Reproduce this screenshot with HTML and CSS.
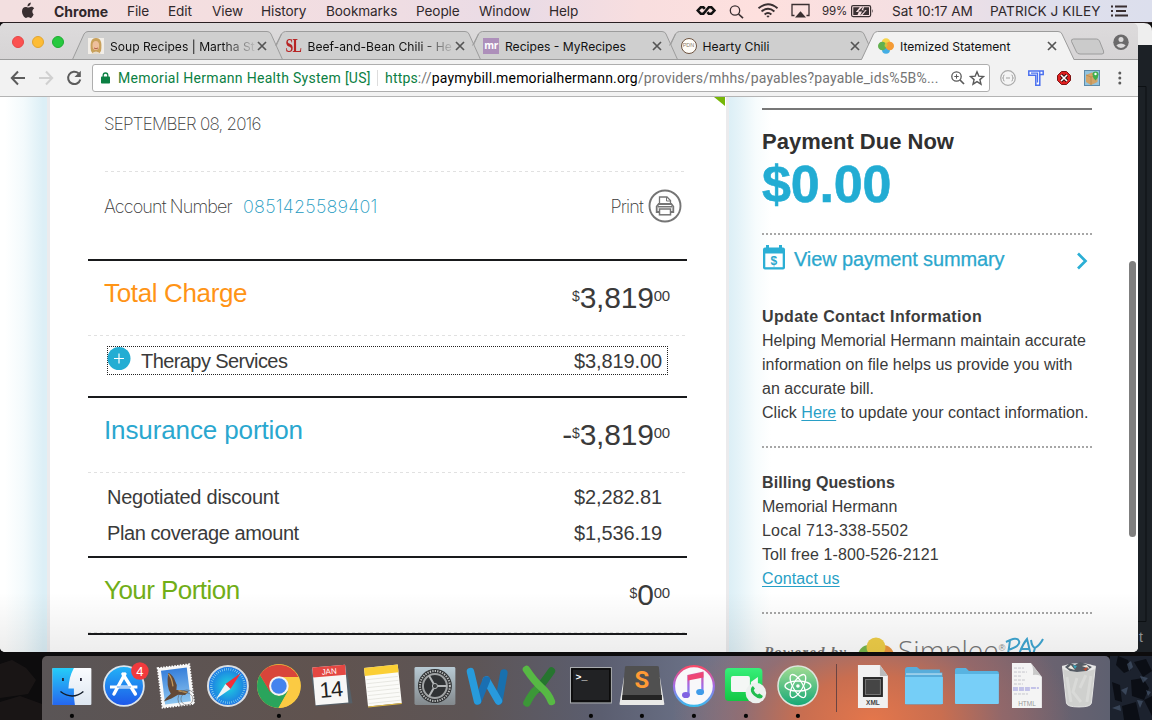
FILE: index.html
```html
<!DOCTYPE html>
<html lang="en">
<head>
<meta charset="utf-8">
<title>Itemized Statement</title>
<link rel="stylesheet" href="styles.css">
</head>
<body>
<div class="desktop">
  <svg class="wallpaper" width="1152" height="720" viewBox="0 0 1152 720">
    <rect width="1152" height="720" fill="#0d0c0d"/>
    <path d="M1120 23h24q8 0 8 8v14h-32z" fill="#eee"/>
    <rect x="1120" y="45" width="32" height="607" fill="#1c2126"/>
    <path d="M1138 86.500h8v535h-8" fill="none" stroke="#0c1013"/>
    <g fill="#201a19"><path d="M0 664l12-4 14 8 10 12-8 14-28 4zM0 702l20-6 22 8v16H0z" opacity=".7"/></g>
    <g fill="#232c3d"><path d="M1110 656h42v64h-42z" opacity=".7"/></g>
    <g fill="#0b0e15"><path d="M1118 656l10 4 3 10-7 3-8-8zM1134 662l12-3 6 12-9 6zM1112 682l8 3 2 17-7-2zM1131 680l12-2 6 10-5 12-12-4zM1122 706l14-4 4 18h-16zM1144 700l8-4v20z"/></g>
    <g fill="#52647d" opacity=".55"><path d="M1127 664l4-3 2 6-4 4zM1140 676l8 2-5 5zM1121 690l7-3-2 8zM1112 708l8-3 1 6zM1137 700l6 1-3 7zM1146 690l5 2-3 4z"/></g>
  </svg>
  <header class="menubar">
    <svg class="apple" width="54" height="22" viewBox="0 0 54 22"><path d="M33.600 14.200c-.7 2-1.900 3.700-3 3.700-.9 0-1.300-.6-2.300-.6s-1.500.6-2.300.6c-1.600 0-4-3.500-4-6.700 0-2.800 1.800-4.300 3.600-4.300 1.100 0 1.900.7 2.700.7.700 0 1.700-.8 3.100-.8 1.100 0 2.200.6 2.800 1.500-2.500 1.500-2.100 4.900-.6 5.900zM30.800 2.600c.2 2-1.400 3.900-3.300 3.900-.3-1.900 1.400-3.700 3.300-3.900z" fill="#392f31"/></svg>
    <b class="m-app">Chrome</b><span>File</span><span>Edit</span><span>View</span><span>History</span><span class="m-book">Bookmarks</span><span>People</span><span>Window</span><span>Help</span>
    <svg class="status" width="126" height="22" viewBox="0 0 126 22" fill="none" stroke="#392f31">
      <path d="M8.800 8.800L7.400 7.200H4.800L1.800 10.500l3 3.300h2.600l5.400-6.600h2.600l3 3.300-3 3.300h-2.600l-1.400-1.600" stroke="#111" stroke-width="2.600"/>
      <circle cx="39" cy="10.500" r="4.700" stroke-width="1.300"/><path d="M42.500 14l4.500 4.200" stroke-width="1.700"/>
      <path d="M62.500 8.300q9.500-8 19 0M65.600 11.400q6.400-5.400 12.800 0M68.600 14.400q3.400-2.800 6.800 0" stroke-width="1.900"/><path d="M70.400 16l1.600 1.700 1.600-1.700q-1.600-1-3.200 0z" fill="#392f31" stroke="none"/>
      <path d="M98.500 15.500h-2.500v-11h17v11h-2.500" stroke-width="1.300"/><path d="M99 17.500l5.500-6.300 5.500 6.300z" fill="#392f31" stroke="none"/>
    </svg>
    <span class="m-pct">99%</span>
    <svg width="42" height="22" viewBox="0 0 42 22"><g transform="translate(1)"><rect x=".6" y="5.600" width="19" height="11" rx="1.500" fill="none" stroke="#392f31" stroke-width="1.200"/><path d="M2.300 7.300h6.500l-4 4.700h3l-1.300 3H2.300zM13 7.300h5V15h-6.500l4.300-5h-3.600zM21 9q1.500 2 0 4z" fill="#392f31"/><path d="M12 6.500l-5 5h4l-2 4.200 5.500-5.400h-4z" fill="#392f31"/></g></svg>
    <span class="m-time">Sat 10:17 AM</span><span class="m-user">PATRICK J KILEY</span>
    <svg width="20" height="22" viewBox="0 0 20 22"><path d="M1 6.500h2M1 11h2M1 15.500h2M5 6.500h12M6 11h10M5 15.500h13" stroke="#392f31" stroke-width="1.900"/></svg>
  </header>

  <main class="window">
    <div class="tabstrip">
      <svg class="tabshapes" width="1138" height="37" viewBox="0 0 1138 37">
        <g fill="#cfcfcf" stroke="#9c9c9c">
          <path d="M664 36.500L675.500 11q1.500-2.500 4-2.500H860q3 0 4 2.500l11.500 25.500"/>
          <path d="M467 36.500L478.500 11q1.500-2.500 4-2.500H662q3 0 4 2.500l11.500 25.500"/>
          <path d="M270 36.500L281.500 11q1.500-2.500 4-2.500H465q3 0 4 2.500l11.500 25.500"/>
          <path d="M72.500 36.500L84 11q1.500-2.500 4-2.500H267q3 0 4 2.500l11.500 25.500"/>
        </g>
        <path d="M275.500 22.500L281.500 11M472.500 22.500L478.500 11M669.500 22.500L675.500 11" stroke="#9c9c9c"/>
        <path d="M0 36.500h1138" stroke="#9c9c9c"/>
        <path d="M861.500 37L873.500 11q1.500-2.500 4-2.500H1058q3 0 4 2.500l12 26z" fill="#f2f2f2"/>
        <path d="M861.500 36.500L873.500 11q1.500-2.500 4-2.500H1058q3 0 4 2.500l12 25.500" fill="none" stroke="#9c9c9c"/>
        <path d="M1071.500 18.500q-.5-2.500 2-2.500h23q2 0 3 2l4 10q1 3-1.500 3h-22q-2.500 0-3.500-2z" fill="#cbcbcb" stroke="#9c9c9c"/>
        <circle cx="1121" cy="19.200" r="7.700" fill="#6b6a6b"/><circle cx="1121" cy="16.600" r="2.500" fill="#dcdadb"/><path d="M1116.300 22.300q4.700-3.700 9.400 0-1.600 2.600-4.700 2.600t-4.700-2.600z" fill="#dcdadb"/>
      </svg>
      <div class="lights"><i class="red"></i><i class="yellow"></i><i class="green"></i></div>
      <div class="tab">
        <svg width="16" height="16"><rect width="16" height="16" fill="#f2eee8"/><path d="M3 13q-2-13 5-13t5 13l-2 3H5z" fill="#c9a15b"/><ellipse cx="7.800" cy="7.500" rx="3.300" ry="4.500" fill="#eebf9c"/><path d="M6 10q2 1.500 4 0" stroke="#b4604d" fill="none"/><path d="M3 16q5-5 10 0z" fill="#e7dccc"/></svg>
        <span class="fade">Soup Recipes | Martha St</span><svg class="x" width="10" height="10"><path d="M1 1l8 8M9 1L1 9"/></svg></div>
      <div class="tab">
        <span class="fav-sl">SL</span>
        <span class="fade">Beef-and-Bean Chili - He</span><svg class="x" width="10" height="10"><path d="M1 1l8 8M9 1L1 9"/></svg></div>
      <div class="tab">
        <span class="fav-mr">mr</span>
        <span>Recipes - MyRecipes</span><svg class="x" width="10" height="10"><path d="M1 1l8 8M9 1L1 9"/></svg></div>
      <div class="tab">
        <span class="fav-pdn">PDN</span>
        <span>Hearty Chili</span><svg class="x" width="10" height="10"><path d="M1 1l8 8M9 1L1 9"/></svg></div>
      <div class="tab">
        <svg width="16" height="16"><circle cx="8" cy="4.500" r="4.200" fill="#f6d44a"/><circle cx="8" cy="11.800" r="4" fill="#44aee4"/><circle cx="4.300" cy="8" r="4.300" fill="#62b14f"/><circle cx="11.800" cy="8" r="4.200" fill="#f49b35"/><path d="M8 4q2 2 1.500 4L8 9.500 6.500 8q0-2 1.500-4z" fill="#d2c23b"/></svg>
        <span>Itemized Statement</span><svg class="x" width="10" height="10"><path d="M1 1l8 8M9 1L1 9"/></svg></div>
    </div>

    <div class="toolbar">
      <svg width="92" height="36" viewBox="0 0 92 36" fill="none" stroke-width="2">
        <path d="M25 18H12.500M18 11.500L11.800 18l6.200 6.500" stroke="#5c5c5c"/>
        <path d="M39 18h12.500M46 11.500l6.200 6.500-6.200 6.500" stroke="#d0d0d0"/>
        <path d="M78.500 13.300a6.200 6.200 0 1 0 1.800 6.200" stroke="#5c5c5c"/><path d="M80.800 10.800v6.300h-6.300z" fill="#5c5c5c"/>
      </svg>
      <div class="omnibox">
        <svg width="9" height="12" viewBox="0 0 9 12"><rect y="4.500" width="9" height="7" rx=".8" fill="#0b8043"/><path d="M2.200 5V3.300a2.300 2.300 0 0 1 4.600 0V5" fill="none" stroke="#0b8043" stroke-width="1.300"/></svg>
        <span class="org">Memorial Hermann Health System [US]</span>
        <span class="url"><em>https</em>://<b>paymybill.memorialhermann.org</b>/providers/mhhs/payables?payable_ids%5B%...</span>
        <svg class="omni-icons" width="36" height="16" viewBox="0 0 36 16" fill="none" stroke="#5a5a5a"><circle cx="6.500" cy="6.500" r="4.700" stroke-width="1.300"/><path d="M10 10l4 4" stroke-width="1.700"/><path d="M4.300 6.500h4.400M6.500 4.300v4.400"/><path d="M27 1.800l1.800 4.300 4.700.4-3.600 3.100 1.100 4.600-4-2.500-4 2.500 1.100-4.600-3.600-3.100 4.700-.4z" stroke-width="1.400"/></svg>
      </div>
      <svg width="146" height="36" viewBox="0 0 146 36">
        <circle cx="18" cy="18" r="7.300" fill="#f4f4f4" stroke="#aaa" stroke-width="1.200"/><path d="M14.500 15q-1.200 0-1 1.500t-1 1.500q1.200 0 1 1.500t1 1.500M21.500 15q1.200 0 1 1.500t1 1.500q-1.200 0-1 1.500t-1 1.500M16 18h4" fill="none" stroke="#999" stroke-width=".9"/>
        <path d="M38.800 11h14.400v3.500h-3.400v10.700h-4V15.200h-7z" fill="#fff" stroke="#4b70ee" stroke-width="1.500"/><path d="M41 13.100h6.500v9.500M49.800 14.500V11" fill="none" stroke="#4b70ee" stroke-width="1.300"/>
        <path d="M71.500 11.500h5l4 4v5l-4 4h-5l-4-4v-5z" fill="#df2020" stroke="#7b1414"/><path d="M71 15l6 6M77 15l-6 6" stroke="#301010" stroke-width="3.200"/><path d="M71 15l6 6M77 15l-6 6" stroke="#fff" stroke-width="1.600"/>
        <rect x="94.500" y="10.500" width="15" height="15" fill="#92c4df" stroke="#5e8baa"/><path d="M96 15l6-2.500 5.500 2.500v7L101 25l-5-3z" fill="#d3a468"/><path d="M101 17v8M96 15l5 2 6.500-2" stroke="#b8854c" stroke-width=".8" fill="none"/><path d="M105.500 11.500q3 0 3 3t-3 6q-3-3-3-6t3-3z" fill="#3fae4d"/><circle cx="105.500" cy="14" r="1.200" fill="#fff"/>
        <g fill="#5c5c5c"><circle cx="129.800" cy="13" r="1.500"/><circle cx="129.800" cy="18" r="1.500"/><circle cx="129.800" cy="23" r="1.500"/></g>
      </svg>
    </div>

    <div class="page">
      <div class="gutter"></div>
      <section class="statement">
        <span class="ribbon"></span>
        <div class="date"><span class="t-date">SEPTEMBER 08, 2016</span></div>
        <div class="account">
          <span class="t-acc">Account Number</span><span class="t-num">0851425589401</span>
          <span class="t-print">Print</span>
          <svg width="34" height="34" viewBox="0 0 34 34" fill="none" stroke="#757575"><circle cx="17" cy="17" r="15.500" stroke-width="1.900" fill="#fff"/><path d="M11.500 15V8h7.500l3.500 3.500V15" stroke-width="1.300"/><path d="M18.500 8v4h4"/><path d="M11 23H8.700v-5.500l2-2.500h12.600l2 2.500V23H23" stroke-width="1.800"/><rect x="11.500" y="20" width="11" height="5.800" stroke-width="1.500" fill="#fff"/><path d="M10 17.800h14" stroke-width="1.500"/></svg>
        </div>
        <div class="group charge">
          <div class="head"><h2 class="orange">Total Charge</h2><p class="amount"><sup>$</sup>3,819<sup class="c">00</sup></p></div>
          <div class="focus"><svg width="24" height="24"><circle cx="12" cy="11.500" r="11.500" fill="#23add3"/><path d="M12 6.500v10M7 11.500h10" stroke="#fff" stroke-width="1.200"/></svg><span class="t-th">Therapy Services</span><span class="val">$3,819.00</span></div>
        </div>
        <div class="group insurance">
          <div class="head"><h2 class="blue">Insurance portion</h2><p class="amount">-<sup>$</sup>3,819<sup class="c">00</sup></p></div>
          <div class="line"><span class="t-neg">Negotiated discount</span><span class="val">$2,282.81</span></div>
          <div class="line"><span class="t-plan">Plan coverage amount</span><span class="val">$1,536.19</span></div>
        </div>
        <div class="group yours"><div class="head"><h2 class="green-t">Your Portion</h2><p class="amount"><sup>$</sup>0<sup class="c">00</sup></p></div></div>
        <div class="group"></div>
      </section>
      <aside class="side">
        <div class="due"><h3>Payment Due Now</h3><strong>$0.00</strong></div>
        <a class="summary"><svg width="24" height="26" viewBox="0 0 24 26"><path d="M3 2.500h18q2 0 2 2v18q0 2-2 2H3q-2 0-2-2v-18q0-2 2-2z" fill="#2bafd5"/><path d="M3.300 8.500h17.400v13.700H3.300z" fill="#fff"/><path d="M5.500 0v4M18.500 0v4" stroke="#2bafd5" stroke-width="3"/></svg><i>$</i><span>View payment summary</span><svg class="chev" width="12" height="18"><path d="M2 1.500L9.500 9 2 16.500" fill="none" stroke="#2bafd5" stroke-width="2.700"/></svg></a>
        <div class="info contact"><h4 class="ha">Update Contact Information</h4><p><span class="l1">Helping Memorial Hermann maintain accurate</span><br>information on file helps us provide you with<br>an accurate bill.<br><span class="l4">Click <a>Here</a> to update your contact information.</span></p></div>
        <div class="info billing"><h4 class="hb">Billing Questions</h4><p><span class="l5">Memorial Hermann</span><br><span class="l6">Local 713-338-5502</span><br><span class="l7">Toll free 1-800-526-2121</span><br><a class="l8">Contact us</a></p></div>
        <div class="powered"><span class="pw">Powered by</span><svg width="36" height="30" viewBox="0 0 36 30"><circle cx="11" cy="19" r="11" fill="#78b84d"/><circle cx="25" cy="19" r="11" fill="#ec973f"/><circle cx="18" cy="10" r="9.500" fill="#f0cf48"/></svg><span class="simplee">Simplee</span><small>®</small><svg class="pay" width="40" height="30" viewBox="0 0 40 30" fill="none" stroke="#3fa7d3" stroke-width="2"><path d="M5 3Q4 12 2 22M1 5Q12-1 14 4T3 13M13 20Q17 8 22 2q2 8 4 17M16 12h9M26 3q1 7 4 8Q35 8 38 2M30 11l-4 13"/></svg></div>
      </aside>
      <div class="page-shade"></div>
      <div class="scrollbar"></div>
    </div>
  </main>
  <span class="stray">t</span>

  <footer class="dock">
    <svg viewBox="0 0 52 64"><defs><linearGradient id="fa" x2="0" y2="1"><stop stop-color="#25cdf8"/><stop offset="1" stop-color="#2567ef"/></linearGradient><linearGradient id="fb" x2="0" y2="1"><stop stop-color="#fafcff"/><stop offset="1" stop-color="#dde6f0"/></linearGradient></defs><rect x="6.500" y="12" width="39" height="37" rx="1" fill="url(#fb)"/><path d="M6.500 12H28q-5 9-5.500 20.500h5.500q-.5 8.500 1 16.500H6.500z" fill="url(#fa)"/><path d="M17 22v3M35 22v3" stroke="#223" stroke-width="1.800"/><path d="M14.500 35.500q12 9 23 0" fill="none" stroke="#121b28" stroke-width="1.500"/><circle class="run" cx="26" cy="60" r="2.100"/></svg>
    <svg viewBox="0 0 52 64"><defs><linearGradient id="as" x2="0" y2="1"><stop stop-color="#22b4f7"/><stop offset="1" stop-color="#1e55e8"/></linearGradient></defs><circle cx="26" cy="30" r="20" fill="url(#as)" stroke="#dce5ec" stroke-width="1.800"/><path d="M27 18L16 38M25 18l12.500 20" stroke="#fff" stroke-width="3.400" stroke-linecap="round"/><path d="M12 31h27.500" stroke="#fff" stroke-width="3"/><path d="M19 31h14" stroke="#2582ef" stroke-width=".8"/><circle cx="42" cy="15" r="8.800" fill="#f13a3d"/><text x="42" y="19.500" class="badge">4</text></svg>
    <svg viewBox="0 0 52 64"><defs><linearGradient id="ml" x2="0" y2="1"><stop stop-color="#377fda"/><stop offset="1" stop-color="#8dc5ef"/></linearGradient></defs><g transform="rotate(-7 26 30)"><rect x="10" y="10" width="32" height="40" fill="#f7f7f7" stroke="#fff" stroke-width="1.800" stroke-dasharray="1.500 1.300"/><rect x="13" y="13" width="26" height="34" fill="url(#ml)"/><path d="M20 16q3 1 5 6l2 7-1 5 5 1 7 2-4 3-7-1-7 3-8 2q3-4 8-7-4-8 0-21z" fill="#644936"/><path d="M20 17q3 4 3 13M28 35l8 3" stroke="#c39859" stroke-width="1.300" fill="none"/></g><circle cx="37" cy="43" r="9" fill="none" stroke="#555" opacity=".55"/><circle cx="37" cy="43" r="6" fill="none" stroke="#555" opacity=".5"/></svg>
    <svg viewBox="0 0 52 64"><defs><radialGradient id="sf"><stop stop-color="#20d6dd"/><stop offset="1" stop-color="#1c72e4"/></radialGradient></defs><circle cx="26" cy="30" r="20" fill="url(#sf)" stroke="#d9dee2" stroke-width="2"/><circle cx="26" cy="30" r="16.800" fill="none" stroke="#9be2f0" stroke-width="2.500" stroke-dasharray=".6 1.600"/><path d="M39 17L28.500 33l-5-5z" fill="#ef2e39"/><path d="M14 43l9.500-15 5 5z" fill="#eef4f6"/></svg>
    <svg viewBox="0 0 52 64"><circle cx="26" cy="30" r="22" fill="#f9c83d"/><path d="M7 19a22 22 0 0 0 18.500 33l9.500-17-9 5-9-5z" fill="#2aa45c"/><path d="M7 19l10 17 8-15h20.500a22 22 0 0 0-38.500-2z" fill="#d9453a"/><path d="M25 21h20.600a22 22 0 0 1-20 31l9.800-17z" fill="#fbca43"/><circle cx="26" cy="30" r="9.800" fill="#f3f3f3"/><circle cx="26" cy="30" r="7.800" fill="#4383ee"/><circle class="run" cx="26" cy="60" r="2.100"/></svg>
    <svg viewBox="0 0 52 64"><g transform="rotate(-5 26 30)"><path d="M7 12l2-1h34l3 38H9z" fill="#566068"/><path d="M9 10h33v38H9z" fill="#f7f7f6"/><path d="M9 10h33v10H9z" fill="#e44742"/><text x="25.500" y="18" class="cal-m">JAN</text><text x="25.500" y="41" class="cal-d">14</text></g></svg>
    <svg viewBox="0 0 52 64"><g transform="rotate(-6 26 30)"><path d="M9 10h34v39H9z" fill="#fbfbf8"/><path d="M9 10h34v8H9z" fill="#fbcf35"/><path d="M10 22h32M10 26h32M10 30h32M10 34h32M10 38h32M10 42h32M10 46h32" stroke="#e3e3dd" stroke-width=".8"/><path d="M9 49.500h34" stroke="#e0ba42"/></g></svg>
    <svg viewBox="0 0 52 64"><defs><linearGradient id="sp" x2="0" y2="1"><stop stop-color="#b8cad4"/><stop offset="1" stop-color="#83898d"/></linearGradient></defs><rect x="5.500" y="11" width="41" height="38" rx="1.500" fill="url(#sp)"/><circle cx="26" cy="30" r="17" fill="#303234"/><circle cx="26" cy="30" r="15" fill="none" stroke="#bdbfbf" stroke-width="2" stroke-dasharray="1.300 1.200"/><circle cx="26" cy="30" r="12" fill="none" stroke="#a0a3a4" stroke-width="2"/><path d="M26 30h12M26 30l-6-10.500M26 30l-6 10.500" stroke="#b2b5b6" stroke-width="2"/><circle cx="26" cy="30" r="2.600" fill="#3b3d3e" stroke="#b2b5b6"/></svg>
    <svg viewBox="0 0 52 64" fill="none" stroke-linecap="round" stroke-width="7.500"><path d="M43 17l-5 28" stroke="#1870ae"/><path d="M25.500 24l12 21" stroke="#289add"/><path d="M25.500 24L17 45" stroke="#1a6fb2"/><path d="M9.500 15.500l7 29.500" stroke="#279bdc"/></svg>
    <svg viewBox="0 0 52 64" fill="none" stroke-linecap="round" stroke-width="7.500"><path d="M38.500 15Q30 27 25 33" stroke="#26752f"/><path d="M24 33q-5 4-10 14" stroke="#3c9738"/><path d="M13.500 13.500q8 12 15 18 7 6 10 14" stroke="#57b944"/></svg>
    <svg viewBox="0 0 52 64"><rect x="5.500" y="11.500" width="41" height="35.500" fill="#212224" stroke="#aeb1b3"/><path d="M7 13h38v32H7z" fill="none" stroke="#090909" stroke-width="1.500"/><text x="10.500" y="24" class="term">&gt;_</text><circle class="run" cx="26" cy="60" r="2.100"/></svg>
    <svg viewBox="0 0 52 64"><path d="M8 21h36l4.500 27q0 1-1 1h-43q-1 0-1-1z" fill="#e9e9e7"/><path d="M9 11q0-1 2-1h30q2 0 2 1l3 33H6z" fill="#505050"/><path d="M6.500 39h39.500v5H6z" fill="#242424"/><text x="26" y="32" class="subl">S</text><circle class="run" cx="26" cy="60" r="2.100"/></svg>
    <svg viewBox="0 0 52 64"><defs><linearGradient id="it" gradientUnits="userSpaceOnUse" x1="0" y1="10" x2="0" y2="50"><stop stop-color="#fa4a67"/><stop offset=".5" stop-color="#a16be8"/><stop offset="1" stop-color="#3bbbed"/></linearGradient></defs><circle cx="26" cy="30" r="20" fill="#f8f8fa" stroke="url(#it)" stroke-width="2.200"/><path d="M20.500 39V20l14-3v19" fill="none" stroke="url(#it)" stroke-width="2.300"/><path d="M20 19.500l15.500-3v5l-15.500 3z" fill="#ef4675"/><ellipse cx="18" cy="39" rx="4" ry="3.100" fill="#8062e2"/><ellipse cx="32.200" cy="36" rx="4" ry="3.100" fill="#3f9be9"/><circle class="run" cx="26" cy="60" r="2.100"/></svg>
    <svg viewBox="0 0 52 64"><defs><linearGradient id="ft" x2="0" y2="1"><stop stop-color="#37ef79"/><stop offset="1" stop-color="#12c744"/></linearGradient></defs><rect x="5" y="12" width="37.500" height="33" rx="4" fill="url(#ft)"/><rect x="11" y="20" width="19" height="16" rx="2" fill="#f4f7f5"/><path d="M31 26l7-5v14l-7-4z" fill="#f4f7f5"/><circle cx="36" cy="37" r="10.300" fill="#edf1ef"/><path d="M31.500 31.500q-2 4 2.500 8t8 2.500l1-2-3.500-2.500-1.700 1q-3-1.500-4-4.300l1.200-1.600-2-2.500z" fill="#22bd4f"/><circle class="run" cx="26" cy="60" r="2.100"/></svg>
    <svg viewBox="0 0 52 64"><defs><linearGradient id="at" x2="0" y2="1"><stop stop-color="#a3dc93"/><stop offset="1" stop-color="#14a876"/></linearGradient></defs><circle cx="26" cy="30" r="20" fill="url(#at)" stroke="#dce5dd" stroke-width="1.500"/><g fill="none" stroke="#fff" stroke-width="1.300"><ellipse cx="26" cy="30" rx="13" ry="5"/><ellipse cx="26" cy="30" rx="13" ry="5" transform="rotate(60 26 30)"/><ellipse cx="26" cy="30" rx="13" ry="5" transform="rotate(120 26 30)"/></g><circle cx="26" cy="30" r="1.800" fill="#fff"/><circle class="run" cx="26" cy="60" r="2.100"/></svg>
    <svg class="sep" viewBox="0 0 22 64"><path d="M12.500 8v48" stroke="#6b4442"/></svg>
    <svg viewBox="0 0 52 64"><path d="M12 9h22l8 11v32H12z" fill="#f1f1f1"/><path d="M34 9v11h8z" fill="#bbb"/><rect x="17" y="21" width="20" height="20" fill="#292929"/><rect x="19.500" y="23.500" width="15" height="15" fill="#454545" stroke="#777"/><text x="27" y="49.500" class="ext">XML</text></svg>
    <svg viewBox="0 0 52 64"><path d="M7 14q0-3 3-3h9l3 2.500h20v3h2.500v31q0 1-2 1h-34q-1.500 0-1.500-1z" fill="#58addb"/><path d="M8 18h36" stroke="#d5edf8"/><path d="M7 21h38v27H7z" fill="#75cef7"/></svg>
    <svg viewBox="0 0 52 64"><path d="M5 14q0-2 2-2h9l3 3h28q2 0 2 2v4H5z" fill="#58b3e1"/><path d="M5 18h44v29q0 1-1 1H6q-1 0-1-1z" fill="#78cff8"/></svg>
    <svg viewBox="0 0 52 64"><path d="M11 7h19l11 14v31H11z" fill="#f4f4f4"/><path d="M30 7q3 5 2 12 6-1 9 2z" fill="#c9c9c9"/><path d="M13 12h10M13 16h13M13 20h8M13 24h12M13 28h9M13 38h14" stroke="#b9b9c2" stroke-width=".8" stroke-dasharray="3 1"/><path d="M12 34h18M12 32h26" stroke="#9392dd" stroke-dasharray="5 1"/><text x="26" y="50" class="ext h">HTML</text></svg>
    <svg viewBox="0 0 52 64"><path d="M9.500 10l4 37q.5 4 12.500 4t12.500-4l4-37z" fill="#cfd0ce" stroke="#e4e4e3"/><ellipse cx="26" cy="11.500" rx="16.500" ry="4.300" fill="#e8e8e8"/><path d="M12 11l5-4 5 2 5-3 6 2 6 3-5 4-10 1-7-1z" fill="#555b64"/><path d="M15 12l3-3 4 5zM29 10l5-1 3 4z" fill="#ece9de"/><path d="M20 9l4 1-2 3z" fill="#38a7bd"/><path d="M30 13l5-2-2 4z" fill="#b64a33"/><path d="M14 21l4 25M38 20l-4 26M24 22l-4 14 8 10M33 19l-6 13" stroke="#e3e4e2" stroke-width="3" fill="none" opacity=".5"/></svg>
  </footer>
</div>
</body>
</html>
```
FILE: styles.css
```css
* { box-sizing: border-box; }
body, h2, h3, h4, p { margin: 0; }
body { font-family: "Liberation Sans", Arial, sans-serif; color: #3a3a3a; overflow: hidden; }
svg { display: block; flex: none; }
.desktop { position: relative; width: 1152px; height: 720px; overflow: hidden; background: #0d0c0d; display: flex; flex-direction: column; }
.wallpaper { position: absolute; left: 0; top: 0; }

/* menu bar */
.menubar { position: relative; height: 23px; border-bottom: 1px solid #291f22; background: linear-gradient(90deg, #f3dfe0 0, #f4dee0 230px, #efdde3 400px, #e9dbe6 520px, #f8dedf 640px, #fee0de 760px, #f5dfe2 900px, #dfdfec 1050px, #dcdfed 1152px); display: grid; grid-template-columns: 54px 73px 41px 44px 49px 65px 90px 63px 70px 147px 126px 28px 42px 98px 120px 20px; align-items: center; font: 13.6px Inter, sans-serif; color: #30282b; white-space: nowrap; letter-spacing: -.1px; }
.m-app { font-weight: 700; font-size: 14px; letter-spacing: 0; }
.m-pct { font-size: 11.5px; letter-spacing: -.1px; }
.m-time { letter-spacing: -.05px; }
.m-user { letter-spacing: .08px; }

/* browser window */
.window { position: relative; width: 1138px; height: 629px; overflow: hidden; border-radius: 5px; background: #fff; display: flex; flex-direction: column; }
.tabstrip { position: relative; height: 37px; flex: none; display: flex; background: linear-gradient(#dddbdc, #d6d4d5); }
.tabshapes { position: absolute; left: 0; top: 0; fill: none; }
.lights { position: relative; display: flex; gap: 8px; padding: 13px 0 0 12px; width: 88px; }
.lights i { width: 12px; height: 12px; border-radius: 50%; }
.red { background: #fb5150; border: 1px solid #e64646; }
.yellow { background: #fdbc35; border: 1px solid #e2a52f; }
.green { background: #27c93f; border: 1px solid #1eac33; }
.tab { position: relative; width: 197.5px; height: 37px; padding-top: 9px; display: flex; align-items: center; gap: 6px; font: 12.1px Inter, sans-serif; color: #111; }
.tab span { white-space: nowrap; }
.tab .fade { -webkit-mask-image: linear-gradient(90deg, #000 112px, transparent 148px); mask-image: linear-gradient(90deg, #000 112px, transparent 148px); }
.x { position: absolute; left: 169px; top: 18px; stroke: #555; stroke-width: 1.7; }
.tab .fav-sl { width: 16px; font: bold 14px/16px "Liberation Serif", serif; letter-spacing: -.8px; color: #b72424; transform: scaleY(1.4); }
.tab .fav-mr { width: 16px; height: 16px; background: #ad8fba; color: #fff; font: bold 10px/14px "Open Sans", sans-serif; text-align: center; letter-spacing: -.4px; }
.tab .fav-pdn { width: 16px; height: 16px; border: 1.500px solid #6e5340; border-radius: 50%; background: #fffdf8; color: #8b7c6c; font: 5.5px/13px "Liberation Sans", sans-serif; text-align: center; }
.toolbar { height: 37px; flex: none; display: flex; align-items: center; background: #f2f2f2; border-bottom: 1px solid #b4b4b4; }
.omnibox { width: 898px; height: 28px; border: 1px solid #aeaeae; border-radius: 3px; background: #fff; display: flex; align-items: center; padding-left: 8px; font: 14px Roboto, sans-serif; white-space: nowrap; color: #747474; }
.omnibox .org { width: 260px; margin-left: 8px; color: #0b8043; letter-spacing: .3px; border-right: 1px solid #ddd; }
.omnibox .url { width: 560px; margin-left: 7px; letter-spacing: .17px; }
.url em { font-style: normal; color: #0b8043; }
.url b { font-weight: 400; color: #000; }
.omni-icons { margin-left: 5px; }

/* page */
.page { position: relative; flex: 1; display: flex; overflow: hidden; }
.gutter { width: 50px; border-right: 3px solid #ebebed; background: linear-gradient(90deg, #fff 5px, #f3fafc 24px, #dceff6 43px); flex: none; }
.statement { position: relative; width: 676px; padding: 0 39px 0 38px; flex: none; }
.ribbon { position: absolute; right: 1px; top: 0; border-top: 9px solid #76b607; border-left: 11px solid transparent; }
.date, .account { margin-left: 17px; display: flex; }
.date { height: 75px; padding-top: 16px; background: repeating-linear-gradient(90deg, #e1e1e1 0 3px, transparent 3px 6px) bottom / 100% 1px no-repeat; font: 200 17px/22px Inter, sans-serif; }
.t-date { letter-spacing: -.75px; margin-left: -1px; }
.account { height: 87px; padding: 17px 5px 0 0; font: 200 18px/36px Inter, sans-serif; }
.account svg { margin-left: 5px; }
.t-acc { width: 139px; letter-spacing: -.88px; margin-left: -1px; }
.t-num { color: #2299c0; letter-spacing: .2px; }
.t-print { margin-left: auto; letter-spacing: -.85px; }
.group { border-top: 2px solid #191a1c; width: 599px; }
.head { height: 75px; background: repeating-linear-gradient(90deg, #e1e1e1 0 3px, transparent 3px 6px) bottom / 100% 1px no-repeat; padding: 0 17px 0 17px; display: flex; justify-content: space-between; }
.head h2 { font-size: 26px; font-weight: 400; line-height: 30px; padding-top: 17px; letter-spacing: -.12px; margin-left: -1px; }
.head .orange { color: #ff9416; letter-spacing: -.35px; }
.blue { color: #2aa7cf; }
.head .green-t { color: #71ae18; letter-spacing: -.55px; }
.amount { font-size: 30px; line-height: 36px; padding-top: 19px; letter-spacing: -.2px; display: flex; }
.amount sup { font-size: 14px; line-height: 14px; padding-top: 9px; }
.amount sup.c { font-size: 15px; }
.charge { height: 137px; }
.focus { margin: 10px 0 0 19px; width: 561px; height: 29px; border: 1px dotted #222; display: flex; font-size: 20px; line-height: 28px; padding-right: 5px; }
.focus svg { margin-left: -1px; }
.t-th { margin-left: 10px; letter-spacing: -.58px; }
.val { margin-left: auto; letter-spacing: -.1px; }
.insurance { height: 160px; }
.insurance .head { margin-bottom: 6px; }
.line { height: 36px; line-height: 36px; padding: 0 25px 0 19px; display: flex; font-size: 20px; }
.t-neg { letter-spacing: -.25px; }
.t-plan { letter-spacing: -.42px; }
.yours { height: 77px; }
.side { width: 412px; flex: none; padding: 11px 46px 0 33px; border-left: 3px solid #ebebed; background: linear-gradient(90deg, #dceff6 0, #e5f3f8 10px, #f7fcfd 27px, #fff 42px); }
.due { border-top: 2px solid #777; height: 127px; padding-top: 20px; background: repeating-linear-gradient(90deg, #a7a7a7 0 2px, transparent 2px 4px) bottom / 100% 2px no-repeat; }
.due h3 { font-size: 22px; line-height: 24px; color: #303030; }
.due strong { display: block; font-size: 52px; line-height: 60px; color: #22acd3; letter-spacing: -.2px; -webkit-text-stroke: .6px #22acd3; }
.summary { display: flex; height: 70px; padding-top: 10px; color: #2ba7cd; font-size: 20px; line-height: 28px; position: relative; letter-spacing: -.13px; }
.summary span { margin-left: 8px; -webkit-text-stroke: .25px #2ba7cd; }
.summary i { position: absolute; left: 8.500px; top: 18px; font: bold 12px/16px "Liberation Sans", sans-serif; }
.chev { margin: 7px 4px 0 auto; }
.info { font-size: 16px; line-height: 24px; }
.info h4 { font-size: 16px; color: #3c3c3c; }
.info .ha { letter-spacing: .36px; }
.info .hb { letter-spacing: .08px; }
.info .l1 { letter-spacing: -.04px; }
.info .l4 { letter-spacing: .04px; }
.info .l5 { letter-spacing: -.05px; }
.info .l6 { letter-spacing: .22px; }
.info .l7 { letter-spacing: .1px; }
.info .l8 { letter-spacing: .12px; }
.info a { color: #289fc6; text-decoration: underline; text-underline-offset: 2px; }
.contact { height: 143px; background: repeating-linear-gradient(90deg, #a7a7a7 0 2px, transparent 2px 4px) bottom / 100% 2px no-repeat; }
.billing { height: 166px; padding-top: 23px; background: repeating-linear-gradient(90deg, #a7a7a7 0 2px, transparent 2px 4px) bottom / 100% 2px no-repeat; }
.powered { display: flex; padding: 23px 0 0 2px; height: 60px; white-space: nowrap; }
.pw { width: 94px; font: italic bold 15px/30px "Liberation Serif", serif; color: #777; letter-spacing: 1.2px; }
.simplee { margin-left: 4px; font: 300 28px/26px "Open Sans", sans-serif; color: #777; letter-spacing: .1px; }
.powered small { font-size: 9px; padding-top: 6px; color: #888; }
.page-shade { position: absolute; left: 0; right: 0; bottom: 0; height: 60px; background: linear-gradient(transparent, rgba(0,0,0,.07)); }
.scrollbar { position: absolute; left: 1129px; top: 164px; width: 7px; height: 276px; border-radius: 4px; background: #7f7f7f; }
.stray { position: absolute; left: 1139px; top: 628px; font: 14px/18px "Liberation Sans", sans-serif; color: #8c9093; }

/* dock */
.dock { position: absolute; left: 42px; top: 656px; width: 1068px; height: 64px; padding: 0 4px; border-radius: 5px 5px 0 0; display: flex; background: radial-gradient(ellipse 200px 130px at 830px 64px, #e4764b 0, #c96e50 35%, rgba(158,105,103,.7) 65%, transparent 100%), linear-gradient(90deg, #5a5556 0, #60534f 280px, #5d5556 430px, #5b5e70 560px, #70788f 690px, #7b7f92 780px, #7c6670 920px, #5e6070 1068px); }
.dock svg { width: 51.86px; height: 64px; }
.dock .sep { width: 22px; }
.run { fill: #050505; }
.badge { font: 13px "Liberation Sans", sans-serif; fill: #fff; text-anchor: middle; }
.cal-m { font: 8px "Liberation Sans", sans-serif; fill: #fff; text-anchor: middle; }
.cal-d { font: 300 22px "Liberation Sans", sans-serif; fill: #222; text-anchor: middle; letter-spacing: -1px; }
.term { font: bold 10px "Liberation Mono", monospace; fill: #fff; }
.subl { font: bold 24px Roboto, sans-serif; fill: #ff9a35; text-anchor: middle; }
.ext { font: bold 6.5px "Liberation Sans", sans-serif; fill: #444; text-anchor: middle; }
.ext.h { font-weight: 400; fill: #999; }
```
